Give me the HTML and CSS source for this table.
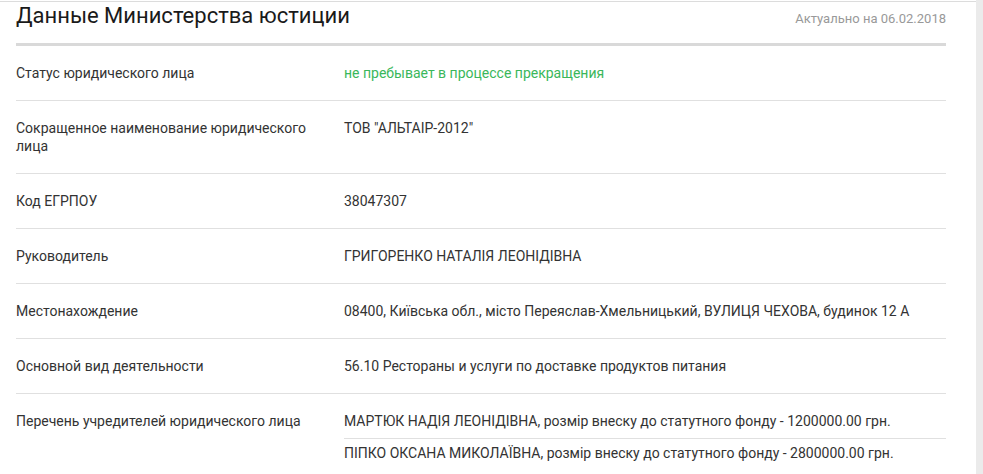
FILE: index.html
```html
<!DOCTYPE html>
<html lang="ru">
<head>
<meta charset="utf-8">
<link rel="stylesheet" href="styles.css">
</head>
<body>
<div class="page">
  <main class="content">
    <header class="head">
      <h2 class="title">Данные Министерства юстиции</h2>
      <span class="date">Актуально на 06.02.2018</span>
    </header>
    <div class="table">
      <div class="row">
        <div class="label">Статус юридического лица</div>
        <div class="value green">не пребывает в процессе прекращения</div>
      </div>
      <div class="row">
        <div class="label">Сокращенное наименование юридического лица</div>
        <div class="value">ТОВ "АЛЬТАІР-2012"</div>
      </div>
      <div class="row">
        <div class="label">Код ЕГРПОУ</div>
        <div class="value">38047307</div>
      </div>
      <div class="row">
        <div class="label">Руководитель</div>
        <div class="value">ГРИГОРЕНКО НАТАЛІЯ ЛЕОНІДІВНА</div>
      </div>
      <div class="row">
        <div class="label">Местонахождение</div>
        <div class="value">08400, Київська обл., місто Переяслав-Хмельницький, ВУЛИЦЯ ЧЕХОВА, будинок 12 А</div>
      </div>
      <div class="row">
        <div class="label">Основной вид деятельности</div>
        <div class="value">56.10 Рестораны и услуги по доставке продуктов питания</div>
      </div>
      <div class="row row-list">
        <div class="label">Перечень учредителей юридического лица</div>
        <ul class="value list">
          <li class="item">МАРТЮК НАДІЯ ЛЕОНІДІВНА, розмір внеску до статутного фонду - 1200000.00 грн.</li>
          <li class="item">ПІПКО ОКСАНА МИКОЛАЇВНА, розмір внеску до статутного фонду - 2800000.00 грн.</li>
        </ul>
      </div>
    </div>
  </main>
  <div class="scrollbar"></div>
</div>
</body>
</html>
```
FILE: styles.css
```css
* { box-sizing: border-box; }
html, body { margin: 0; padding: 0; height: 100%; overflow: hidden; }
body {
  font-family: Roboto, "Liberation Sans", sans-serif;
  color: #333;
  background: #fff;
}
.page {
  display: flex;
  height: 474px;
}
.content {
  flex: 1;
  border-top: 1px solid #dcdcdc;
  margin-top: 1px;
  padding: 0 30px 0 16px;
}
.scrollbar {
  width: 7px;
  background: #ebebeb;
  flex-shrink: 0;
}
.head {
  display: flex;
  justify-content: space-between;
  align-items: baseline;
  height: 44px;
  border-bottom: 3px solid #d9d9d9;
}
.title {
  margin: 0;
  font-size: 22px;
  font-weight: 400;
  color: #1a1a1a;
  line-height: 28px;
}
.date {
  font-size: 13px;
  color: #999;
}
.row {
  display: grid;
  grid-template-columns: 328px 1fr;
  border-bottom: 1px solid #e0e0e0;
  font-size: 14px;
  line-height: 18px;
}
.label, .value {
  padding: 18px 0;
}
.label { padding-right: 20px; }
.value { color: #333; }
.green { color: #3ab75b; }
.list {
  list-style: none;
  margin: 0;
  padding: 13px 0 0;
}
.item { padding: 5px 0 8px; }
.item + .item { border-top: 1px solid #e0e0e0; }
.row-list { border-bottom: none; }
```
